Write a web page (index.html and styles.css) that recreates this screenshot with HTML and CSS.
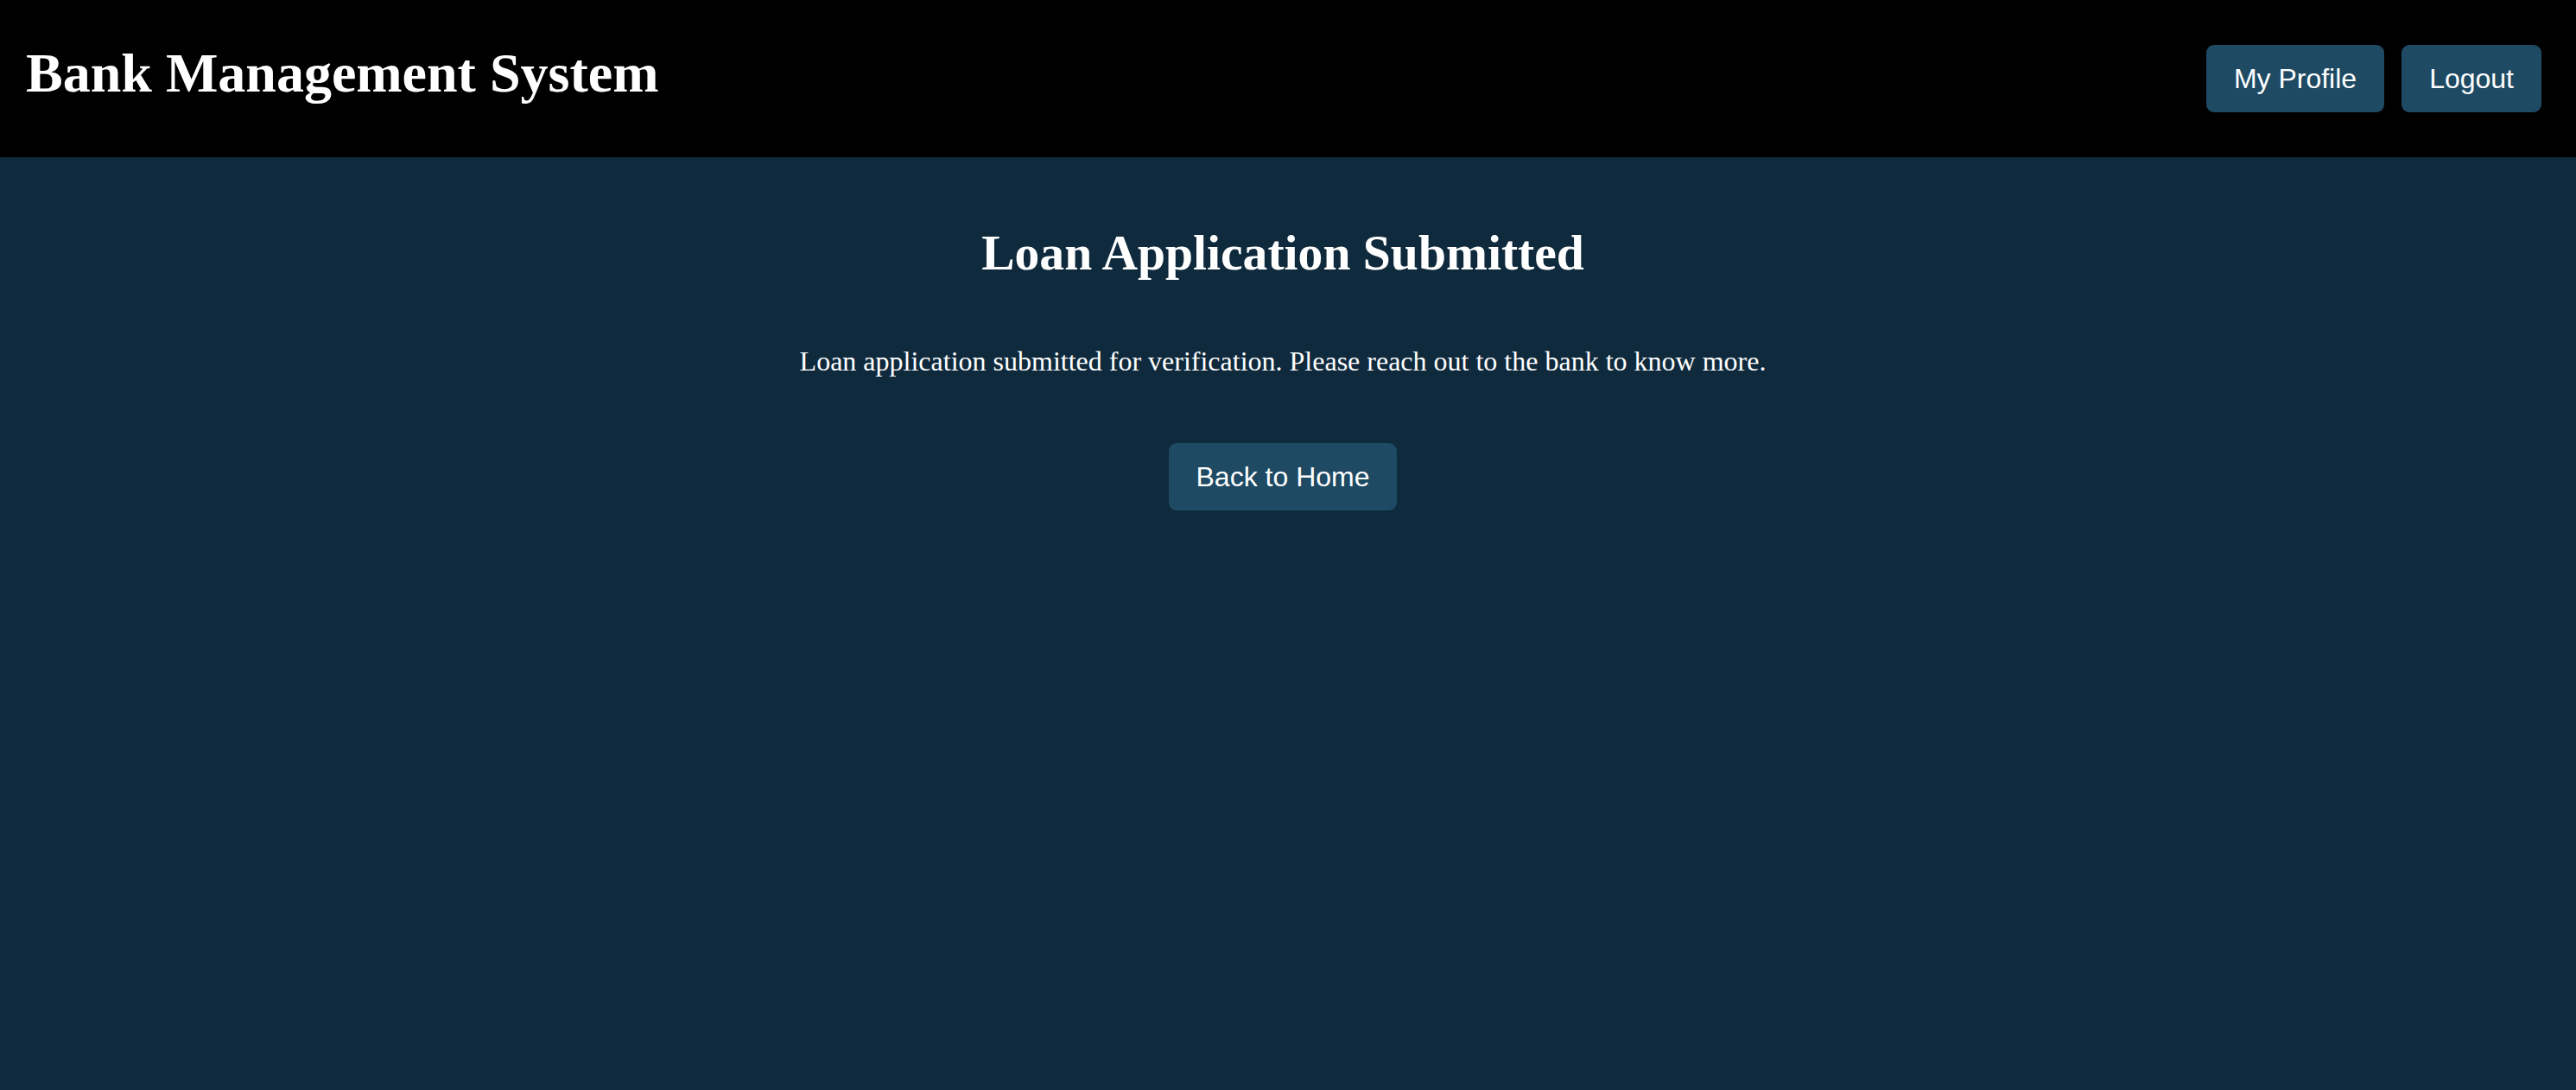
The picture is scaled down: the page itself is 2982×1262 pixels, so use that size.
FILE: index.html
```html
<!DOCTYPE html>
<html lang="en">
<head>
<meta charset="utf-8">
<title>Bank Management System</title>
<link rel="stylesheet" href="styles.css">
</head>
<body>
<header class="topbar">
  <h1 class="brand">Bank Management System</h1>
  <nav class="actions">
    <button class="btn">My Profile</button>
    <button class="btn">Logout</button>
  </nav>
</header>
<main class="content">
  <h2 class="title">Loan Application Submitted</h2>
  <p class="message">Loan application submitted for verification. Please reach out to the bank to know more.</p>
  <button class="btn">Back to Home</button>
</main>
</body>
</html>
```

FILE: styles.css
```css
html, body {
  margin: 0;
  padding: 0;
  height: 100%;
}
body {
  background: #0f2a3d;
  color: #ffffff;
  font-family: "Liberation Serif", "Times New Roman", serif;
  display: flex;
  flex-direction: column;
}
.topbar {
  background: #000000;
  height: 182px;
  box-sizing: border-box;
  padding: 0 40px 0 30px;
  display: flex;
  align-items: center;
  justify-content: space-between;
  flex-shrink: 0;
}
.brand {
  margin: 0 0 13px 0;
  font-size: 64px;
  font-weight: bold;
  line-height: 74px;
}
.actions {
  display: flex;
  gap: 20px;
}
.btn {
  background: #1e4a63;
  color: #ffffff;
  border: none;
  border-radius: 9px;
  padding: 20px 32px;
  font-family: "Liberation Sans", Arial, sans-serif;
  font-size: 32px;
  line-height: 38px;
  cursor: pointer;
}
.content {
  flex: 1;
  display: flex;
  flex-direction: column;
  align-items: center;
  padding: 78px 12px 0 0;
  text-align: center;
}
.title {
  margin: 0 0 75px 0;
  font-size: 57.6px;
  font-weight: bold;
}
.message {
  margin: 0 0 76px 0;
  font-size: 32px;
}
```
